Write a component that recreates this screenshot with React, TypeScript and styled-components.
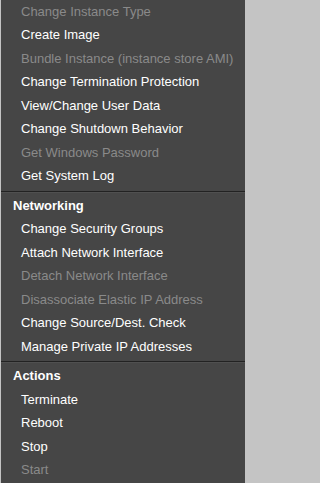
import React from "react";
import styled, { createGlobalStyle } from "styled-components";

const Global = createGlobalStyle`
  html, body { margin: 0; padding: 0; background: #c4c4c4; overflow: hidden; }
  body { font-family: "Liberation Sans", Arial, sans-serif; }
`;

const Menu = styled.div`
  margin: -0.5px 0 0 1px;
  width: 244px;
  height: 484px;
  background: #464646;
  display: flex;
  flex-direction: column;
  overflow: hidden;
  box-sizing: border-box;
`;

const Item = styled.div<{ $disabled?: boolean }>`
  height: 23.5px;
  line-height: 23.5px;
  padding-left: 20px;
  font-size: 13px;
  color: ${(p) => (p.$disabled ? "#8a8a8a" : "#ffffff")};
  white-space: nowrap;
  flex-shrink: 0;
`;

const Header = styled.div`
  height: 23.5px;
  line-height: 23.5px;
  padding-left: 12px;
  font-size: 13px;
  font-weight: bold;
  color: #ffffff;
  flex-shrink: 0;
`;

const Separator = styled.div`
  flex-shrink: 0;
  margin: 3px 0 1px;
  height: 1px;
  border-top: 1px solid #222222;
  background: #505050;
`;

type Entry = { label: string; disabled?: boolean };

const groups: { title?: string; items: Entry[] }[] = [
  {
    items: [
      { label: "Change Instance Type", disabled: true },
      { label: "Create Image" },
      { label: "Bundle Instance (instance store AMI)", disabled: true },
      { label: "Change Termination Protection" },
      { label: "View/Change User Data" },
      { label: "Change Shutdown Behavior" },
      { label: "Get Windows Password", disabled: true },
      { label: "Get System Log" },
    ],
  },
  {
    title: "Networking",
    items: [
      { label: "Change Security Groups" },
      { label: "Attach Network Interface" },
      { label: "Detach Network Interface", disabled: true },
      { label: "Disassociate Elastic IP Address", disabled: true },
      { label: "Change Source/Dest. Check" },
      { label: "Manage Private IP Addresses" },
    ],
  },
  {
    title: "Actions",
    items: [
      { label: "Terminate" },
      { label: "Reboot" },
      { label: "Stop" },
      { label: "Start", disabled: true },
    ],
  },
];

export default function App() {
  return (
    <>
      <Global />
      <Menu>
        {groups.map((g, gi) => (
          <React.Fragment key={gi}>
            {gi > 0 && <Separator />}
            {g.title && <Header>{g.title}</Header>}
            {g.items.map((it) => (
              <Item key={it.label} $disabled={it.disabled}>
                {it.label}
              </Item>
            ))}
          </React.Fragment>
        ))}
      </Menu>
    </>
  );
}
